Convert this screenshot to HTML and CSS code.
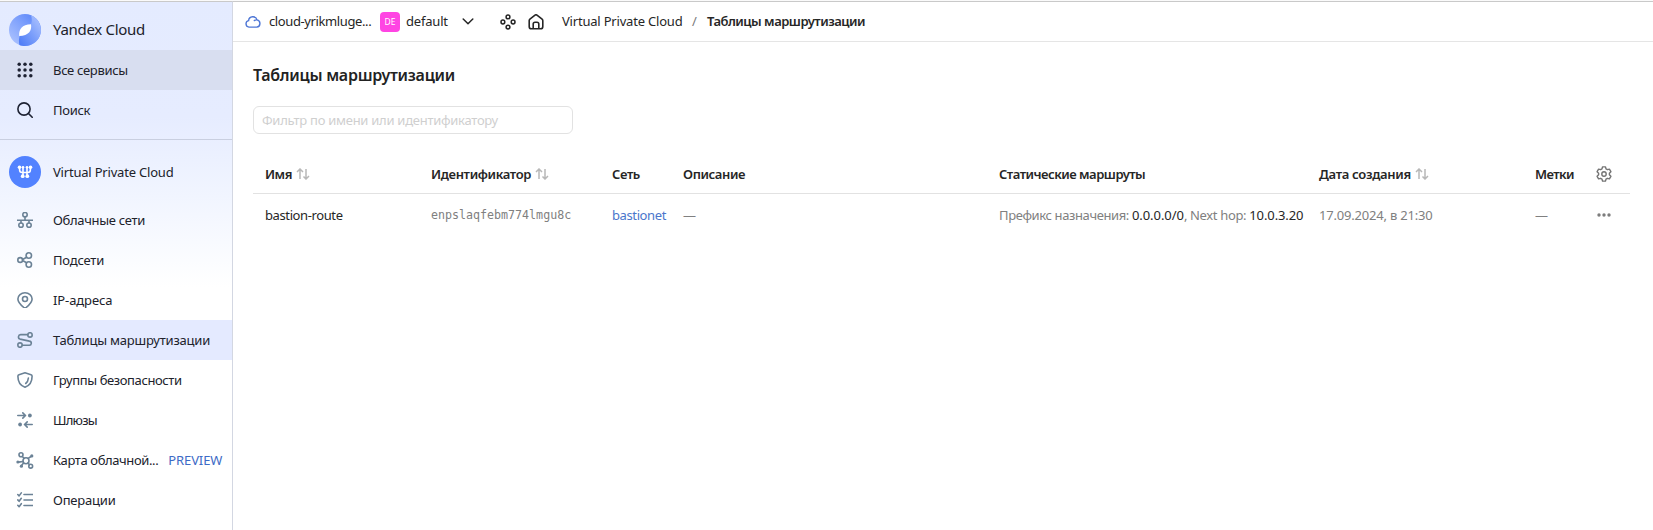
FILE: index.html
```
<!DOCTYPE html>
<html lang="ru">
<head>
<meta charset="utf-8">
<title>Таблицы маршрутизации</title>
<link rel="stylesheet" href="styles.css">
</head>
<body>
<div class="app">
  <aside class="sidebar">
    <div class="logo">
      <span class="icon-slot">
        <svg width="32" height="32" viewBox="0 0 32 32">
          <defs>
            <linearGradient id="g1" x1="0" y1="1" x2="1" y2="0"><stop offset="0" stop-color="#b4c8ff"/><stop offset=".55" stop-color="#7fa1fc"/><stop offset="1" stop-color="#4f7df8"/></linearGradient>
            <linearGradient id="g2" x1="0" y1="1" x2="1" y2="0"><stop offset="0" stop-color="#4a79f6"/><stop offset=".5" stop-color="#7c9ffb"/><stop offset="1" stop-color="#b4c8ff"/></linearGradient>
          </defs>
          <circle cx="16" cy="16" r="16" fill="url(#g1)"/>
          <path d="M22 1.200A16 16 0 0 1 16 32c-2 0-4-.4-5.600-1C9.500 27 10 23.500 11 21.500L22 10.500c1-3 1-6.500 0-9.300z" fill="url(#g2)"/>
          <path d="M22 10.300c1 6.200-2.200 11.600-11.800 11.800C9.500 15.500 13 10.500 22 10.300z" fill="#fff"/>
        </svg>
      </span>
      <span class="brand t3">Yandex Cloud</span>
    </div>
    <div class="nav-item hovered">
      <span class="icon-slot">
        <svg width="16" height="16" viewBox="0 0 16 16" fill="#1e2233"><circle cx="2.200" cy="2.200" r="1.750"/><circle cx="8" cy="2.200" r="1.750"/><circle cx="13.800" cy="2.200" r="1.750"/><circle cx="2.200" cy="8" r="1.750"/><circle cx="8" cy="8" r="1.750"/><circle cx="13.800" cy="8" r="1.750"/><circle cx="2.200" cy="13.800" r="1.750"/><circle cx="8" cy="13.800" r="1.750"/><circle cx="13.800" cy="13.800" r="1.750"/></svg>
      </span>
      <span class="t3">Все сервисы</span>
    </div>
    <div class="nav-item">
      <span class="icon-slot">
        <svg width="16" height="16" viewBox="0 0 16 16" fill="none" stroke="#1e2233" stroke-width="1.600" stroke-linecap="round"><circle cx="7" cy="7" r="6.100"/><path d="M11.500 11.500l3.700 3.700"/></svg>
      </span>
      <span class="t3">Поиск</span>
    </div>
    <div class="service">
      <span class="icon-slot">
        <svg width="32" height="32" viewBox="0 0 32 32">
          <circle cx="16" cy="16" r="16" fill="#5282ff"/>
          <path d="M10.600 11.500v2.300q0 2.700 2.700 2.700h5.400q2.700 0 2.700-2.700v-2.300M14 11.500v9M18 11.500v9" fill="none" stroke="#fff" stroke-width="1.600"/>
          <g fill="#fff"><circle cx="10.500" cy="11.300" r="1.800"/><circle cx="14" cy="11.300" r="1.300"/><circle cx="18" cy="11.300" r="1.300"/><circle cx="21.500" cy="11.300" r="1.800"/><circle cx="13.700" cy="20.200" r="1.900"/><circle cx="18.300" cy="20.200" r="1.900"/></g>
        </svg>
      </span>
      <span class="t2">Virtual Private Cloud</span>
    </div>
    <nav class="menu">
      <div class="nav-item">
        <span class="icon-slot"><svg class="mi" viewBox="0 0 16 16"><circle cx="8" cy="2.700" r="2.200"/><path d="M8 5v3M0 8.200h16M4 8.200V11M12 8.200V11"/><circle cx="4" cy="13.200" r="2.200"/><circle cx="12" cy="13.200" r="2.200"/></svg></span>
        <span class="t3">Облачные сети</span>
      </div>
      <div class="nav-item">
        <span class="icon-slot"><svg class="mi" viewBox="0 0 16 16"><circle cx="3.200" cy="8" r="2.400"/><circle cx="11.800" cy="3.500" r="2.700"/><circle cx="11.800" cy="12.500" r="2.700"/><path d="M5.600 7.500l4-2.300M5.600 8.500l4 2.300"/></svg></span>
        <span class="t2">Подсети</span>
      </div>
      <div class="nav-item">
        <span class="icon-slot"><svg class="mi" viewBox="0 0 16 16"><path d="M15.100 7c0 3-3.600 6.600-5.800 8.400q-1.300 1-2.600 0C4.500 13.600.9 10 .9 7a7.100 6.200 0 0 1 14.200 0z"/><circle cx="8" cy="7" r="2.500"/></svg></span>
        <span class="t1">IP-адреса</span>
      </div>
      <div class="nav-item active">
        <span class="icon-slot"><svg class="mi" viewBox="0 0 16 16"><circle cx="13" cy="2.900" r="2.200"/><circle cx="3" cy="13.100" r="2.200"/><path d="M10.800 2.600H3.700a2.300 2.300 0 0 0-.6 4.500l9.300 2a2.100 2.100 0 0 1-.4 4.200H5.200"/></svg></span>
        <span class="t2">Таблицы маршрутизации</span>
      </div>
      <div class="nav-item">
        <span class="icon-slot"><svg class="mi" viewBox="0 0 16 16"><path d="M8 .8l6 1.900q1.100.4 1.100 1.500c0 5.500-2.600 9.400-7.100 11-4.500-1.600-7.100-5.500-7.100-11Q.9 3.100 2 2.700z"/><path d="M11.400 6c-.2 2.400-1 4.200-2.700 5.500"/></svg></span>
        <span class="t4">Группы безопасности</span>
      </div>
      <div class="nav-item">
        <span class="icon-slot"><svg class="mi" viewBox="0 0 16 16"><path d="M.8 3.500h7.600M5.800.9l2.700 2.600-2.700 2.600M15.200 12.500H7.600M10.200 9.900l-2.700 2.600 2.700 2.600"/><g class="dot"><circle cx="12.900" cy="3.500" r="1.900"/><circle cx="3.100" cy="12.500" r="1.900"/></g></svg></span>
        <span class="t7">Шлюзы</span>
      </div>
      <div class="nav-item">
        <span class="icon-slot"><svg class="mi wide" viewBox="0 0 18 17"><circle cx="5" cy="2.800" r="2"/><circle cx="10" cy="8.700" r="3"/><circle cx="14.700" cy="14.200" r="1.900"/><path d="M6.300 4.500l1.800 1.800M12.200 6.400L15 4.500M7 9.500l-4.500.6M7.500 11l-1.700 2.300M12 10.900l1.500 1.900"/><g class="dot"><circle cx="15.800" cy="3.900" r="1.600"/><circle cx="1.900" cy="10" r="1.600"/><circle cx="5.400" cy="14.200" r="1.600"/></g></svg></span>
        <span class="t4">Карта облачной...</span>
        <span class="preview t1">PREVIEW</span>
      </div>
      <div class="nav-item">
        <span class="icon-slot"><svg class="mi" viewBox="0 0 16 16"><path d="M.8 2.500l1.300 1.400L4.300.9M.8 7.900l1.300 1.400 2.200-3M.8 13.300l1.300 1.400 2.200-3M7 2.500h8.600M7 8h8.600M7 13.500h8.600"/></svg></span>
        <span class="t2">Операции</span>
      </div>
    </nav>
  </aside>
  <main class="main">
    <header class="topbar">
      <svg class="cloud" width="16" height="13" viewBox="0 0 16 13" fill="none" stroke="#4f77d6" stroke-width="1.400" stroke-linecap="round"><path d="M4 12.100a3.300 3.300 0 0 1-.4-6.500A4.300 4.300 0 0 1 12 4.900a3.650 3.650 0 0 1-.3 7.200zM9.300 5.600q1.100-.9 2.600-.7"/></svg>
      <span class="cloud-name t4">cloud-yrikmluge...</span>
      <span class="badge">DE</span>
      <span class="folder">default</span>
      <svg class="chevron" width="12" height="7" viewBox="0 0 12 7" fill="none" stroke="#262626" stroke-width="1.500" stroke-linecap="round" stroke-linejoin="round"><path d="M1.200 1L6 5.800 10.800 1"/></svg>
      <svg class="nodes" width="16" height="16" viewBox="0 0 16 16" fill="none" stroke="#262626" stroke-width="1.500"><circle cx="8" cy="2.900" r="1.900"/><circle cx="8" cy="13.100" r="1.900"/><circle cx="2.900" cy="8" r="1.900"/><circle cx="13.100" cy="8" r="1.900"/></svg>
      <svg class="home" width="16" height="16" viewBox="0 0 16 16" fill="none" stroke="#262626" stroke-width="1.600" stroke-linejoin="round"><path d="M1.200 6.600q0-.9.700-1.500l4.800-3.800q1.300-1 2.600 0l4.800 3.800q.7.600.7 1.500v5.800q0 2.400-2.400 2.400H3.600q-2.400 0-2.400-2.400zM5.200 14.600V10q0-1.800 1.800-1.800h2q1.800 0 1.800 1.800v4.600"/></svg>
      <span class="crumb t2">Virtual Private Cloud</span>
      <span class="slash">/</span>
      <span class="crumb-current t5">Таблицы маршрутизации</span>
    </header>
    <section class="content">
      <h1>Таблицы маршрутизации</h1>
      <input class="filter" type="text" placeholder="Фильтр по имени или идентификатору">
      <div class="table">
        <div class="row head">
          <div class="cell"><span class="t5">Имя</span><svg class="sort" viewBox="0 0 14 12"><path d="M4 11V1M1 4l3-3 3 3M10 1v10M7.500 8.500L10 11l3-3"/></svg></div>
          <div class="cell"><span class="t35">Идентификатор</span><svg class="sort" viewBox="0 0 14 12"><path d="M4 11V1M1 4l3-3 3 3M10 1v10M7.500 8.500L10 11l3-3"/></svg></div>
          <div class="cell"><span class="t4">Сеть</span></div>
          <div class="cell"><span class="t4">Описание</span></div>
          <div class="cell"><span class="t5">Статические маршруты</span></div>
          <div class="cell"><span class="t3">Дата создания</span><svg class="sort" viewBox="0 0 14 12"><path d="M4 11V1M1 4l3-3 3 3M10 1v10M7.500 8.500L10 11l3-3"/></svg></div>
          <div class="cell"><span class="t6">Метки</span></div>
          <div class="cell action"><svg width="16" height="16" viewBox="0 0 16 16" fill="none" stroke="#747474" stroke-width="1.400" stroke-linejoin="round"><path d="M6.500.9h3l.5 2 1.400.8 2-.6 1.500 2.600-1.500 1.500v1.600l1.500 1.500-1.500 2.600-2-.6-1.400.8-.5 2h-3l-.5-2-1.400-.8-2 .6-1.500-2.600 1.500-1.500V7.200L1.100 5.700l1.500-2.600 2 .6L6 2.900z"/><circle cx="8" cy="8" r="2.200"/></svg></div>
        </div>
        <div class="row">
          <div class="cell"><span class="t4">bastion-route</span></div>
          <div class="cell mono">enpslaqfebm774lmgu8c</div>
          <div class="cell link"><span class="t4">bastionet</span></div>
          <div class="cell muted">—</div>
          <div class="cell"><span class="muted t4">Префикс назначения:&nbsp;</span><span class="t05">0.0.0.0/0</span><span class="muted t35">, Next hop:&nbsp;</span><span class="t1">10.0.3.20</span></div>
          <div class="cell muted"><span class="t2">17.09.2024, в 21:30</span></div>
          <div class="cell muted">—</div>
          <div class="cell action"><svg width="14" height="4" viewBox="0 0 14 4" fill="#7d7d7d"><circle cx="2" cy="2" r="1.700"/><circle cx="7" cy="2" r="1.700"/><circle cx="12" cy="2" r="1.700"/></svg></div>
        </div>
      </div>
    </section>
  </main>
</div>
</body>
</html>
```
FILE: styles.css
```
* { box-sizing: border-box; }

body {
  margin: 0;
  height: 530px;
  overflow: hidden;
  background: #fff;
  color: #262626;
  font: 13px/18px "Noto Sans", sans-serif;
}

svg { display: block; flex: none; }

.app {
  display: flex;
  height: 530px;
  border-top: 1px solid #fafafa;
}

.app > * { border-top: 1px solid #c9c9c9; }

/* Sidebar */
.sidebar {
  flex: none;
  width: 233px;
  border-right: 1px solid #d3d7e2;
  background: linear-gradient(#e4ebff 0, #e6ecff 115px, #f1f5ff 195px, #fff 285px);
  color: #20222b;
  white-space: nowrap;
}

.logo,
.nav-item,
.service {
  display: flex;
  align-items: center;
}

.logo { height: 48px; padding-top: 8px; }
.brand { font-size: 15px; padding-bottom: 2px; }
.nav-item { height: 40px; }
.hovered { background: #d8def0; }
.active { background: #e4eaff; }

.icon-slot {
  display: flex;
  justify-content: center;
  flex: none;
  width: 50px;
  margin-right: 3px;
}

.service {
  height: 65px;
  margin: 9px 0 -4px;
  border-top: 1px solid #c9cfe0;
}

.mi {
  width: 16px;
  height: 16px;
  fill: none;
  stroke: #6b8296;
  stroke-width: 1.6;
  stroke-linecap: round;
  stroke-linejoin: round;
}

.mi.wide { width: 18px; height: 17px; }
.mi .dot { fill: #6b8296; stroke: none; }

.preview { margin-left: 10px; color: #3d6bc6; }

/* Main area */
.main { flex: 1; min-width: 0; }

.topbar {
  display: flex;
  align-items: center;
  height: 40px;
  border-bottom: 1px solid #e5e5e5;
  padding-left: 12px;
  white-space: nowrap;
}

.topbar span:not(.badge) { padding-bottom: 1px; }

.cloud-name { width: 103px; margin-left: 8px; }

.badge {
  width: 20px;
  height: 20px;
  margin-left: 8px;
  border-radius: 4px;
  background: #ff45e3;
  color: #fff;
  font-size: 8.5px;
  line-height: 20px;
  text-align: center;
}

.folder { width: 43px; margin-left: 6px; letter-spacing: -0.2px; }
.chevron { margin-left: 13px; }
.nodes { margin-left: 26px; }
.home { margin-left: 12px; }
.crumb { width: 121px; margin-left: 18px; }
.slash { width: 6px; margin-left: 9px; color: #7a7a7a; }
.crumb-current { margin-left: 9px; font-weight: 600; }

.content { padding: 21px 23px 0 20px; }

h1 {
  margin: 0;
  font-size: 16px;
  line-height: 24px;
  font-weight: 600;
  letter-spacing: -0.26px;
  color: #222;
}

.filter {
  display: block;
  width: 320px;
  height: 28px;
  margin-top: 19px;
  padding: 0 8px;
  border: 1px solid #e2e2e2;
  border-radius: 6px;
  background: #fff;
  font: 13px "Noto Sans", sans-serif;
  letter-spacing: -0.27px;
}

.filter::placeholder { color: #cfcfcf; opacity: 1; }

/* Table */
.table { margin-top: 21px; }

.row {
  display: grid;
  grid-template-columns: 166px 181px 71px 316px 320px 216px 57px 24px;
  align-items: center;
  height: 42px;
  padding-left: 12px;
  white-space: nowrap;
}

.head {
  height: 39px;
  border-bottom: 1px solid #e2e2e2;
  font-weight: 600;
}

.cell { display: flex; align-items: center; }
.action { justify-content: center; }

.sort {
  width: 14px;
  height: 12px;
  margin-left: 4px;
  fill: none;
  stroke: #b8b8b8;
  stroke-width: 1.5;
}

.muted { color: #808080; }
.link { color: #4a76cc; }

.mono {
  font-family: "DejaVu Sans Mono", monospace;
  font-size: 11.65px;
  color: #808080;
}

/* Tracking steps */
.t05 { letter-spacing: -0.05px; }
.t1 { letter-spacing: -0.1px; }
.t2 { letter-spacing: -0.2px; }
.t3 { letter-spacing: -0.31px; }
.t35 { letter-spacing: -0.35px; }
.t4 { letter-spacing: -0.39px; }
.t5 { letter-spacing: -0.5px; }
.t6 { letter-spacing: -0.57px; }
.t7 { letter-spacing: -0.74px; }
```
